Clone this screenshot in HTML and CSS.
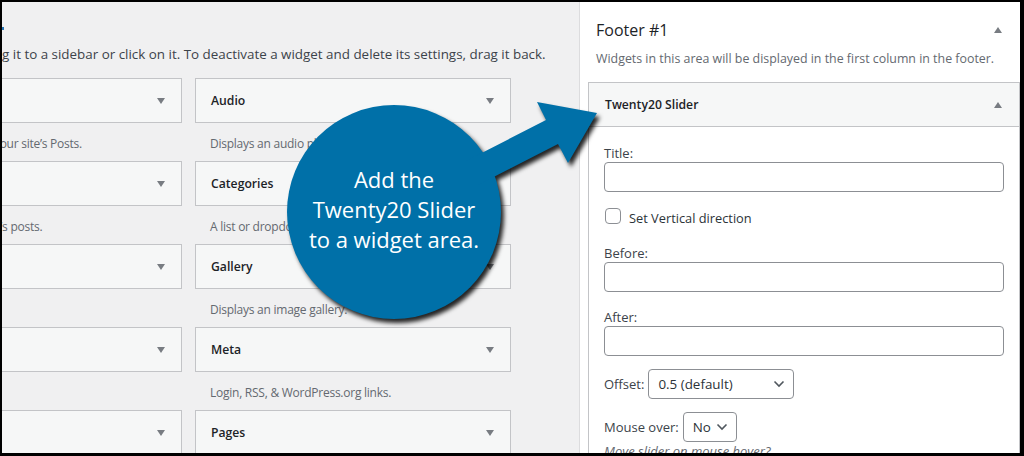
FILE: index.html
```html
<!DOCTYPE html>
<html>
<head>
<meta charset="utf-8">
<link rel="stylesheet" href="styles.css">
</head>
<body>

<div class="frame">
  <div class="screen">

    <!-- Available widgets (cut off on the left) -->
    <div class="available">
      <div class="avail-mark"></div>
      <div class="avail-desc">g it to a sidebar or click on it. To deactivate a widget and delete its settings, drag it back.</div>
      <div class="widget-grid">
        <div class="widget-item">
          <div class="widget-box"><h3 class="widget-title">Archives</h3><span class="tri-down"></span></div>
          <div class="widget-desc">A monthly archive of your site’s Posts.</div>
        </div>
        <div class="widget-item">
          <div class="widget-box"><h3 class="widget-title">Audio</h3><span class="tri-down"></span></div>
          <div class="widget-desc">Displays an audio player.</div>
        </div>
        <div class="widget-item">
          <div class="widget-box"><h3 class="widget-title">Calendar</h3><span class="tri-down"></span></div>
          <div class="widget-desc">A calendar of your site’s posts.</div>
        </div>
        <div class="widget-item">
          <div class="widget-box"><h3 class="widget-title">Categories</h3><span class="tri-down"></span></div>
          <div class="widget-desc">A list or dropdown of categories.</div>
        </div>
        <div class="widget-item">
          <div class="widget-box"><h3 class="widget-title">Custom HTML</h3><span class="tri-down"></span></div>
          <div class="widget-desc">Arbitrary HTML code.</div>
        </div>
        <div class="widget-item">
          <div class="widget-box"><h3 class="widget-title">Gallery</h3><span class="tri-down"></span></div>
          <div class="widget-desc">Displays an image gallery.</div>
        </div>
        <div class="widget-item">
          <div class="widget-box"><h3 class="widget-title">Image</h3><span class="tri-down"></span></div>
          <div class="widget-desc">Displays an image.</div>
        </div>
        <div class="widget-item">
          <div class="widget-box"><h3 class="widget-title">Meta</h3><span class="tri-down"></span></div>
          <div class="widget-desc">Login, RSS, &amp; WordPress.org links.</div>
        </div>
        <div class="widget-item">
          <div class="widget-box"><h3 class="widget-title">Navigation Menu</h3><span class="tri-down"></span></div>
          <div class="widget-desc">Add a navigation menu to your sidebar.</div>
        </div>
        <div class="widget-item">
          <div class="widget-box"><h3 class="widget-title">Pages</h3><span class="tri-down"></span></div>
          <div class="widget-desc">A list of your site’s Pages.</div>
        </div>
      </div>
    </div>

    <!-- Footer #1 sidebar -->
    <div class="sidebar">
      <div class="sidebar-head">
        <h2 class="sidebar-name">Footer #1</h2>
        <span class="tri-up"></span>
      </div>
      <div class="sidebar-desc">Widgets in this area will be displayed in the first column in the footer.</div>

      <div class="widget-open">
        <div class="widget-top">
          <h3 class="widget-title">Twenty20 Slider</h3>
          <span class="tri-up"></span>
        </div>
        <div class="widget-inside">
          <div class="field">
            <label>Title:</label>
            <input type="text" class="text-input">
          </div>
          <div class="check-row">
            <span class="checkbox"></span>
            <span class="check-label">Set Vertical direction</span>
          </div>
          <div class="field">
            <label>Before:</label>
            <input type="text" class="text-input">
          </div>
          <div class="field field-after">
            <label>After:</label>
            <input type="text" class="text-input">
          </div>
          <div class="select-row">
            <span>Offset:</span>
            <div class="select select-offset">
              <span>0.5 (default)</span>
              <svg width="12" height="8" viewBox="0 0 12 8"><path d="M1.5 1.5 L6 6 L10.5 1.5" fill="none" stroke="#50575e" stroke-width="1.6"/></svg>
            </div>
          </div>
          <div class="select-row">
            <span>Mouse over:</span>
            <div class="select select-mouse">
              <span>No</span>
              <svg width="12" height="8" viewBox="0 0 12 8"><path d="M1.5 1.5 L6 6 L10.5 1.5" fill="none" stroke="#50575e" stroke-width="1.6"/></svg>
            </div>
          </div>
          <div class="hint">Move slider on mouse hover?</div>
        </div>
      </div>
    </div>

  </div>
</div>

<!-- Callout bubble laid over the screenshot -->
<svg class="callout" width="1024" height="456" viewBox="0 0 1024 456">
  <g class="bubble">
    <circle cx="394" cy="212" r="107" fill="#0070a8"/>
    <polygon points="466,161 546,120 537,102 597,113 568,163 558,144 478,185" fill="#0070a8"/>
  </g>
</svg>
<div class="callout-text">Add the<br>Twenty20 Slider<br>to a widget area.</div>

</body>
</html>
```

FILE: styles.css
```css
body {
  margin: 0;
  background-color: #000;
  font-family: "Open Sans", "Liberation Sans", sans-serif;
  font-size: 13px;
  color: #3c434a;
  width: 1024px;
  height: 456px;
  overflow: hidden;
}

/* black border round the screenshot */
.frame {
  padding: 2px 4px 3px 2px;
}

.screen {
  display: flex;
  height: 451px;
  background-color: #f0f0f1;
  overflow: hidden;
}

/* left column: available widgets */
.available {
  width: 577px;
  flex: none;
  overflow: hidden;
}

/* tail of a cut-off link at the left edge */
.avail-mark {
  width: 2px;
  height: 3px;
  margin-top: 25px;
  background-color: #2271b1;
}

.avail-desc {
  padding-top: 15px;
  font-size: 13.4px;
  line-height: 18px;
  white-space: nowrap;
  color: #3c434a;
  margin-bottom: 15px;
}

.widget-grid {
  display: grid;
  grid-template-columns: 316px 316px;
  column-gap: 13px;
  margin-left: -136px;
}

.widget-box {
  height: 45px;
  box-sizing: border-box;
  border: 1px solid #c3c4c7;
  background-color: #f6f7f7;
  display: flex;
  align-items: center;
  justify-content: space-between;
  padding: 0 16px 0 15px;
}

.widget-title {
  margin: 0;
  font-size: 12.2px;
  font-weight: 600;
  color: #1d2327;
}

.widget-desc {
  padding: 12px 15px 8px;
  font-size: 12px;
  letter-spacing: -0.25px;
  line-height: 18px;
  color: #646970;
  white-space: nowrap;
}

.tri-down {
  width: 0;
  height: 0;
  border-left: 4px solid transparent;
  border-right: 4px solid transparent;
  border-top: 6px solid #787c82;
}

.tri-up {
  width: 0;
  height: 0;
  border-left: 4px solid transparent;
  border-right: 4px solid transparent;
  border-bottom: 6px solid #787c82;
}

/* right column: sidebar */
.sidebar {
  flex: 1;
  background-color: #fff;
  border-left: 1px solid #dcdcde;
}

.sidebar-head {
  display: flex;
  align-items: center;
  justify-content: space-between;
  padding: 16px 18px 0 16px;
  height: 24px;
}

.sidebar-name {
  margin: 0;
  font-size: 16px;
  font-weight: 400;
  line-height: 24px;
  color: #1d2327;
}

.sidebar-desc {
  margin-top: 8px;
  padding-left: 16px;
  font-size: 12.4px;
  line-height: 18px;
  color: #646970;
  white-space: nowrap;
}

.widget-open {
  margin: 14px 0 0 8px;
  border: 1px solid #c3c4c7;
  background-color: #fff;
}

.widget-top {
  height: 43px;
  display: flex;
  align-items: center;
  justify-content: space-between;
  padding: 0 17px 0 16px;
  background-color: #f6f7f7;
  border-bottom: 1px solid #c3c4c7;
}

.widget-inside {
  padding: 17px 15px 0 15px;
}

.field label {
  display: block;
  line-height: 18px;
}

.text-input {
  display: block;
  width: 400px;
  height: 30px;
  box-sizing: border-box;
  border: 1px solid #8c8f94;
  border-radius: 4px;
  background: #fff;
  margin: 0;
}

.check-row {
  display: flex;
  align-items: center;
  gap: 8px;
  height: 32px;
  margin-top: 8px;
  margin-bottom: 12px;
  color: #2c3338;
}

.check-label {
  padding-top: 4px;
  font-size: 12.8px;
}

.checkbox {
  width: 16px;
  height: 16px;
  box-sizing: border-box;
  border: 1px solid #8c8f94;
  border-radius: 4px;
  margin-left: 1px;
}

.field-after {
  margin-top: 16px;
}

.select-row {
  display: flex;
  align-items: center;
  gap: 4px;
  margin-top: 13px;
}

.select {
  height: 30px;
  box-sizing: border-box;
  border: 1px solid #8c8f94;
  border-radius: 4px;
  display: flex;
  align-items: center;
  justify-content: space-between;
  padding: 0 8px 0 9px;
  color: #2c3338;
  font-size: 13.4px;
}

.select-offset {
  width: 146px;
}

.select-mouse {
  width: 54px;
}

.hint {
  font-style: italic;
  color: #646970;
  line-height: 18px;
}

/* callout */
.callout {
  position: absolute;
  left: 0;
  top: 0;
  pointer-events: none;
}

.bubble {
  filter: drop-shadow(3px 4px 2px rgba(0, 0, 0, 0.85));
}

.callout-text {
  position: absolute;
  left: 294px;
  top: 164px;
  width: 200px;
  text-align: center;
  color: #fff;
  font-family: "Open Sans", sans-serif;
  font-size: 22px;
  line-height: 30px;
  white-space: nowrap;
}
```
